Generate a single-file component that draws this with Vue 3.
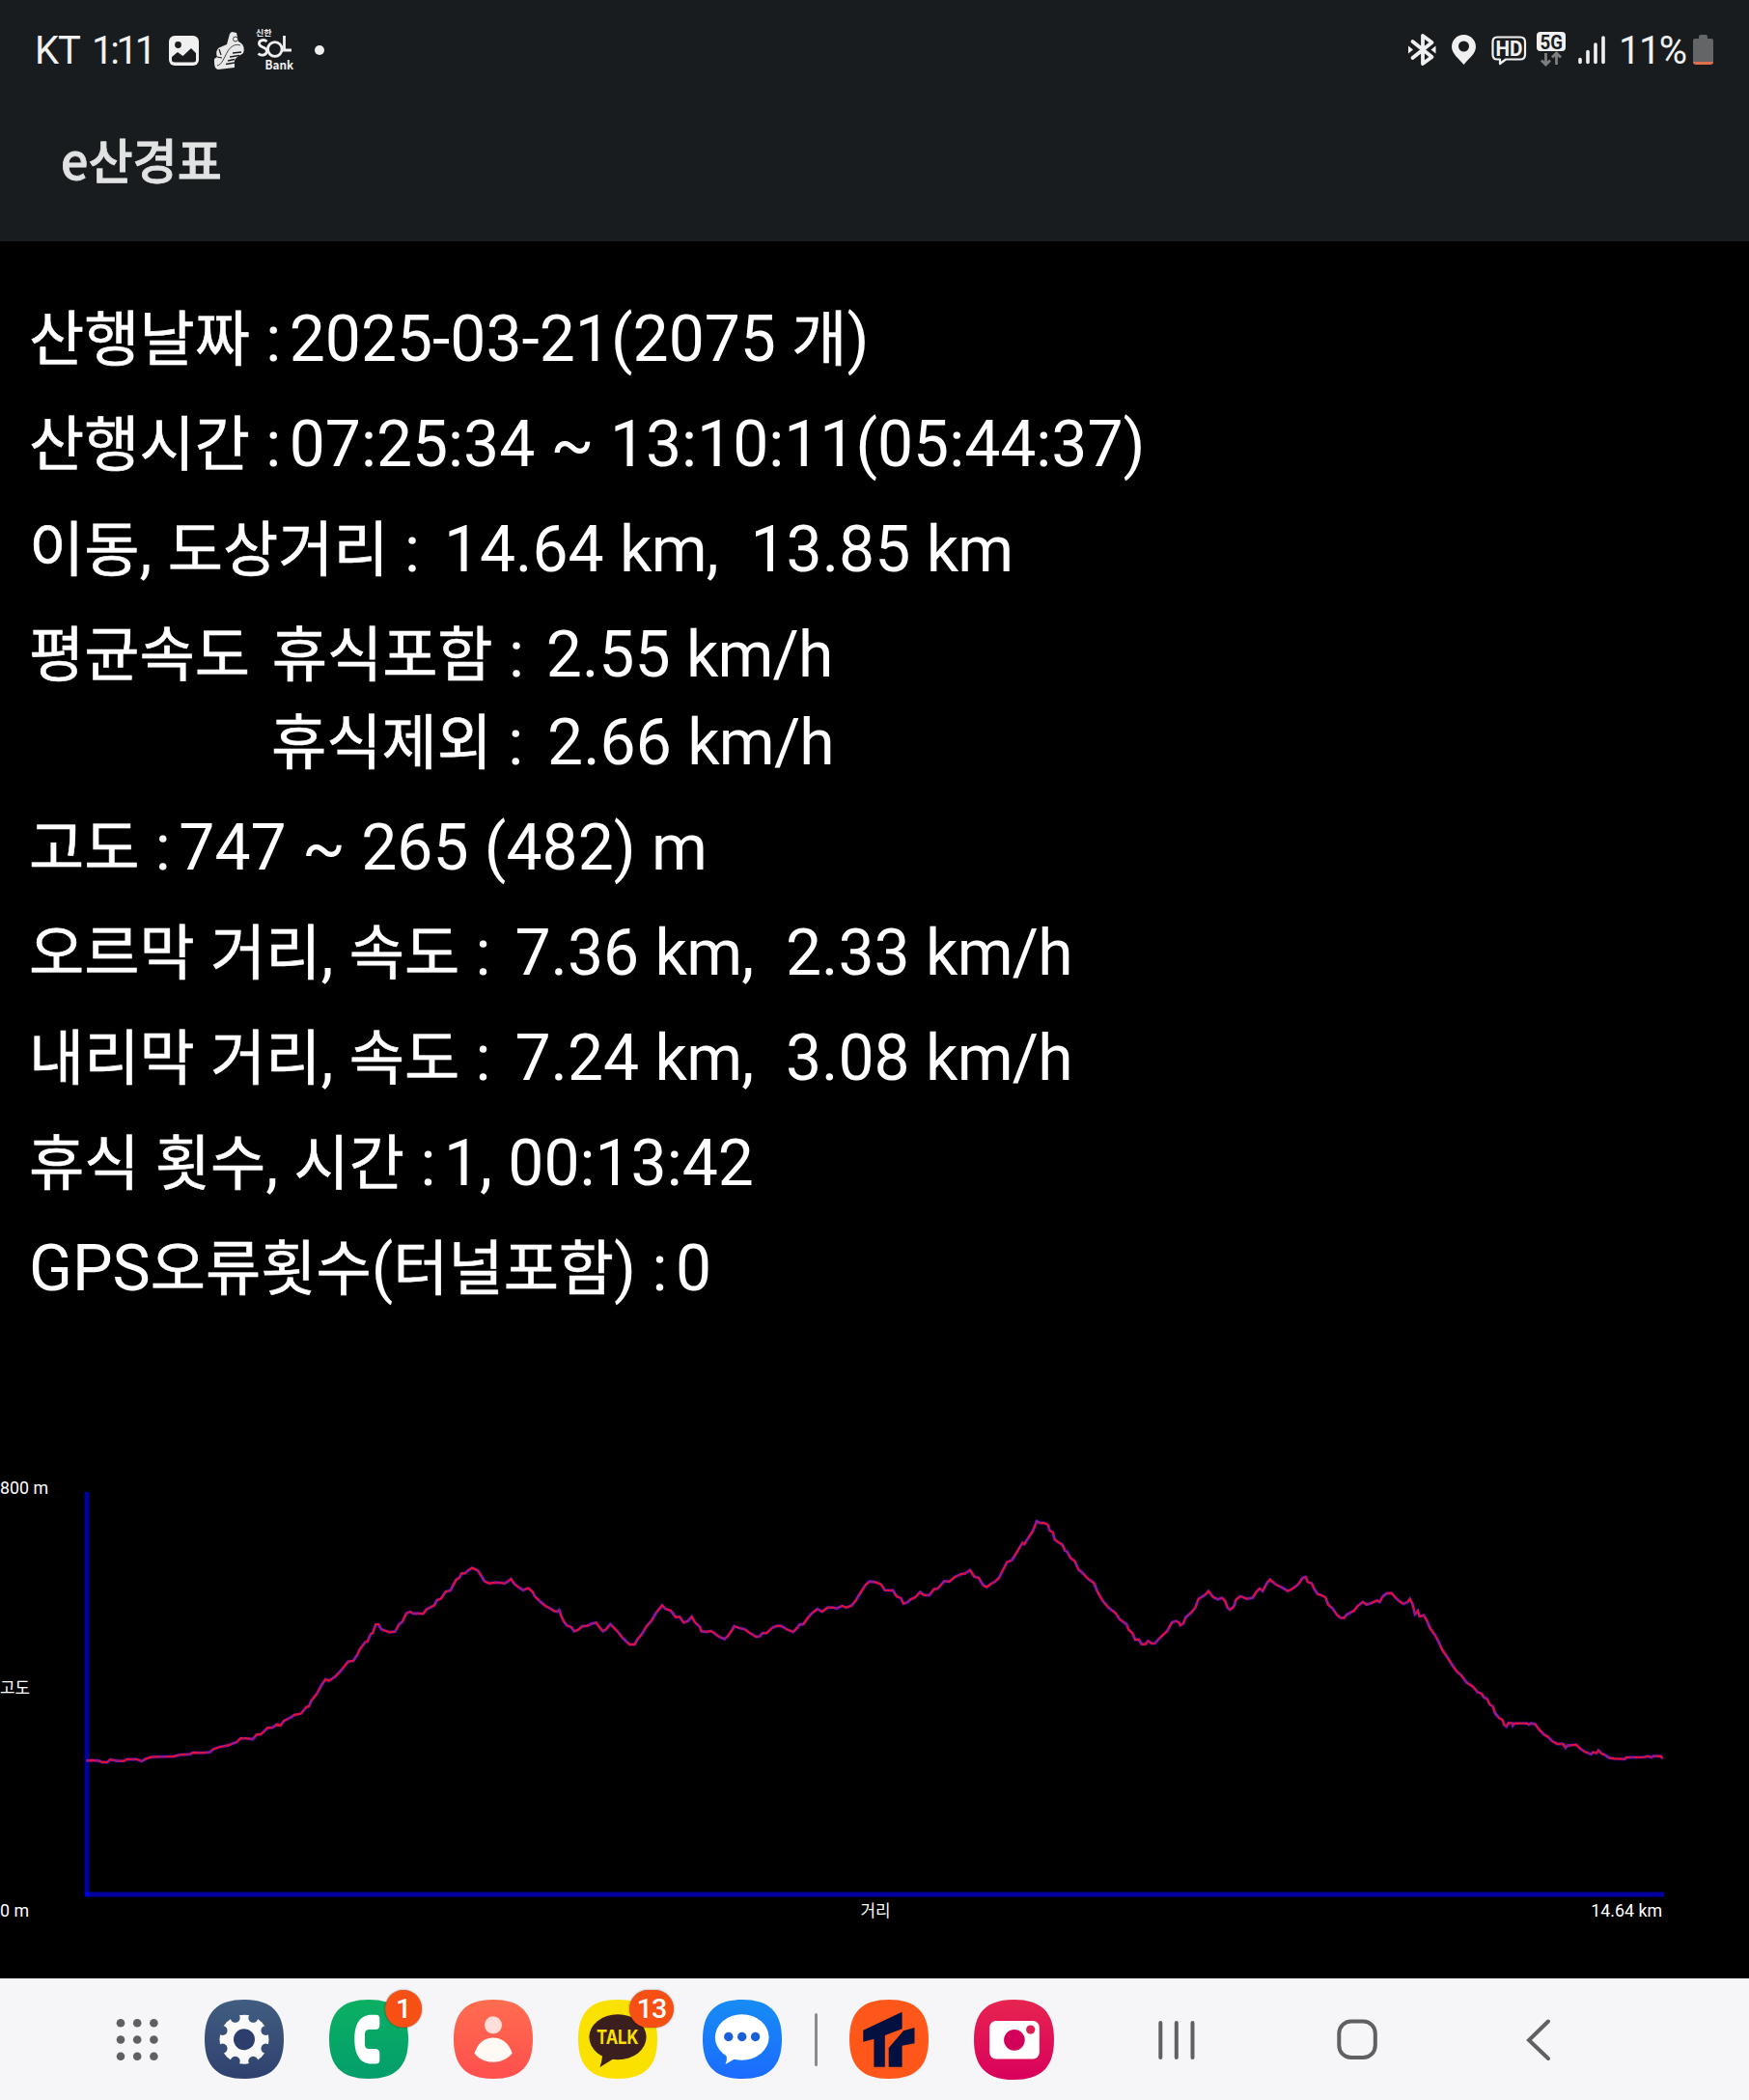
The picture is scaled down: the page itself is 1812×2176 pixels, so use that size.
<template>
  <div class="screen">
    <header class="header">
      <div class="status-bar">
        <span class="carrier">KT</span>
        <span class="clock">1:11</span>
        <svg class="icon-image" width="31" height="44" viewBox="0 0 31 44">
          <rect x="0" y="7" width="31" height="31" rx="6" fill="#f0f0f0" />
          <circle cx="9.5" cy="16.5" r="3.4" fill="#191c1f" />
          <path d="M3 29 L9 24 L14.500 28 L23 20 L28 25 V32 Q28 34.500 25.500 34.500 H6 Q3 34.500 3 32 Z" fill="#191c1f" />
        </svg>
        <svg class="icon-shoe" width="31" height="44" viewBox="0 0 31 44">
          <path d="M16 5 L18 3 L23 4 L25 13 C30 15 32 20 30 25 C28 27 22 29 21 33 L21 40 L4 42 C0 41 0 37 0 31 L3 29 C1 24 3 20 6 19 L13 16 Z" fill="#e8e8e8" />
          <path d="M3 38 C8 37 10 30 14 23 C17 18 22 15 27 17" fill="none" stroke="#191c1f" stroke-width=".8" />
          <path d="M19 25 L28 24 M16 29 L26 27.500 M14 33 L21 31.500 M12 36.500 L21 35" stroke="#191c1f" stroke-width="1.400" />
          <path d="M5 21 L7 27 M3 29 L8 30" stroke="#191c1f" stroke-width="1.200" />
          <circle cx="22" cy="10.500" r="2.500" fill="none" stroke="#191c1f" stroke-width=".8" />
        </svg>
        <svg class="icon-sol" width="40" height="56" viewBox="0 -5 40 56">
          <text class="sol-top" x="0" y="7.500" textLength="16.500" lengthAdjust="spacingAndGlyphs">신한</text>
          <path d="M11.500 14 C8 11 3 13 3.500 16.500 C4 20.500 11.500 19.500 11.500 24 C11.500 28 6 29.500 2.500 26.500" />
          <circle cx="19.800" cy="22" r="7.300" />
          <path d="M29.500 8 V23 H37" />
          <text class="sol-bank" x="9.500" y="42.500" textLength="29.500" lengthAdjust="spacingAndGlyphs">Bank</text>
        </svg>
        <span class="more-dot"></span>

        <svg class="icon-bluetooth" width="29" height="44" viewBox="0 0 29 44">
          <path d="M4.500 13 L24.500 29 L15 36 V7 L24.500 14 L4.500 30" fill="none" stroke="#f0f0f0" stroke-width="3.800" stroke-linejoin="round" stroke-linecap="round" />
          <path d="M0 17.500 L5 21.500 L0 25.500 Z M28.500 17.500 L23.500 21.500 L28.500 25.500 Z" fill="#f0f0f0" />
        </svg>
        <svg class="icon-pin" width="25" height="44" viewBox="0 0 25 44">
          <path fill-rule="evenodd" d="M12.500 6 C5.500 6 0 11.500 0 18.500 C0 25.500 7.500 31 12.500 37 C17.500 31 25 25.500 25 18.500 C25 11.500 19.500 6 12.500 6 Z M12.500 12.500 A5.500 5.500 0 1 1 12.500 23.500 A5.500 5.500 0 1 1 12.500 12.500 Z" fill="#f0f0f0" />
        </svg>
        <svg class="icon-hd" width="37" height="44" viewBox="0 0 37 44">
          <path d="M6 8.500 H30 Q35 8.500 35 13.500 V26.500 Q35 31.500 30 31.500 H15 L9 36 V31.500 H6 Q1.500 31.500 1.500 26.500 V13.500 Q1.500 8.500 6 8.500 Z" fill="none" stroke="#f0f0f0" stroke-width="2.200" stroke-linejoin="round" />
          <text x="4.500" y="28" textLength="28" lengthAdjust="spacingAndGlyphs">HD</text>
        </svg>
        <svg class="icon-5g" width="30" height="44" viewBox="0 0 30 44">
          <rect x="0" y="3" width="30" height="20" rx="4" fill="#f0f0f0" />
          <text x="3.500" y="20.500" textLength="23.500" lengthAdjust="spacingAndGlyphs">5G</text>
          <path d="M9.500 25 V36.500 M5 32.500 L9.500 37 L14 32.500 M20.500 37 V25.500 M16 29.500 L20.500 25 L25 29.500" fill="none" stroke="#7d7f80" stroke-width="2.800" />
        </svg>
        <svg class="icon-signal" width="28" height="44" viewBox="0 0 28 44">
          <path d="M2 31.500 V34.500 M10 23.500 V34.500 M18 16 V34.500 M26 9 V34.500" stroke="#f0f0f0" stroke-width="3.600" stroke-linecap="round" />
        </svg>
        <span class="battery-level">11%</span>
        <svg class="icon-battery" width="21" height="44" viewBox="0 0 21 44">
          <path d="M6 8 Q6 6 8 6 H13 Q15 6 15 8 V10 H19 Q21 10 21 12 V34 H0 V12 Q0 10 2 10 H6 Z" fill="#646566" />
          <path d="M0 34 H21 Q21 37 18 37 H3 Q0 37 0 34 Z" fill="#e0704d" />
        </svg>
      </div>
      <h1 class="title">e산경표</h1>
    </header>

    <main class="content">
      <div v-for="(row, index) in rows" :key="index" class="row" :class="{ sub: row.sub }">
        <span v-for="(cell, c) in row.cells" :key="c" class="cell">
          <span v-for="(run, r) in splitRuns(cell)" :key="r" :class="run.kind">{{ run.text }}</span>
        </span>
      </div>
    </main>

    <section class="chart">
      <svg width="1812" height="550" viewBox="0 1500 1812 550">
        <g class="axes">
          <line x1="90" y1="1546" x2="90" y2="1965" />
          <line x1="88" y1="1963" x2="1724" y2="1963" />
        </g>
        <polyline class="track-shadow" :points="trackPoints" />
        <polyline class="track" :points="trackPoints" />
        <polyline class="track-gaps" :points="trackPoints" />
        <g class="labels">
          <text x="0" y="1548">800 m</text>
          <text class="ko" x="0" y="1754.500">고도</text>
          <text x="0" y="1985.500">0 m</text>
          <text class="ko" x="891.500" y="1985.500">거리</text>
          <text x="1722" y="1985.500" text-anchor="end">14.64 km</text>
        </g>
      </svg>
    </section>

    <nav class="dock">
      <svg class="apps" width="46" height="46" viewBox="0 0 46 46">
        <circle v-for="n in 9" :key="n" :cx="6 + ((n - 1) % 3) * 17.200" :cy="6.300 + Math.floor((n - 1) / 3) * 17.200" r="4.300" />
      </svg>

      <div class="app">
        <svg width="82" height="82" viewBox="0 0 82 82">
          <defs>
            <linearGradient id="g-settings" x1="0" y1="0" x2="0" y2="1">
              <stop offset="0" stop-color="#415d80" />
              <stop offset="1" stop-color="#2f416f" />
            </linearGradient>
            <mask id="gear">
              <circle cx="41" cy="41.300" r="25.500" fill="#fff" />
              <circle v-for="n in 8" :key="n" cx="41" cy="17" r="5" fill="#000" :transform="`rotate(${n * 45 - 22.5} 41 41.300)`" />
              <circle cx="41" cy="41.300" r="11" fill="#000" />
            </mask>
          </defs>
          <path :d="squircle" fill="url(#g-settings)" />
          <circle cx="41" cy="41.300" r="12" fill="#2d3e6c" />
          <rect x="10" y="10" width="62" height="62" fill="#fafafa" mask="url(#gear)" />
        </svg>
      </div>

      <div class="app">
        <svg width="82" height="82" viewBox="0 0 82 82">
          <defs>
            <linearGradient id="g-phone" x1="0" y1="0" x2="0" y2="1">
              <stop offset="0" stop-color="#0bb062" />
              <stop offset="1" stop-color="#039e6b" />
            </linearGradient>
          </defs>
          <path :d="squircle" fill="url(#g-phone)" />
          <path d="M48.500 15.700 H44 C32 15.700 26.300 25 26.300 41 S32 66.500 44 66.500 H48.500 Q52.300 66.500 52.300 62.500 V55.500 Q52.300 51 47.500 51 H41.500 Q37 51 37 46.500 V35.500 Q37 31 41.500 31 H47.500 Q52.300 31 52.300 26.500 V19.500 Q52.300 15.700 48.500 15.700 Z" fill="#fff" />
        </svg>
        <span class="badge">1</span>
      </div>

      <div class="app">
        <svg width="82" height="82" viewBox="0 0 82 82">
          <defs>
            <linearGradient id="g-contacts" x1="0" y1="0" x2="0" y2="1">
              <stop offset="0" stop-color="#ff6d4f" />
              <stop offset="1" stop-color="#ff4f4e" />
            </linearGradient>
          </defs>
          <path :d="squircle" fill="url(#g-contacts)" />
          <circle cx="41" cy="26.300" r="9" fill="#ffded9" />
          <path d="M21.500 55.500 C25 45 32 39.500 41 39.500 S57 45 60.700 55.500 C57 60.500 50 64.700 41 64.700 S25 60.500 21.500 55.500 Z" fill="#fffaf3" />
        </svg>
      </div>

      <div class="app">
        <svg width="82" height="82" viewBox="0 0 82 82">
          <path :d="squircle" fill="#fae100" />
          <ellipse cx="41" cy="38.800" rx="29.600" ry="23.500" fill="#3b1e1e" />
          <path d="M25.300 57 Q24.500 65 22.500 70 L37 61 Z" fill="#3b1e1e" />
          <text class="talk" x="19" y="46" textLength="43.500" lengthAdjust="spacingAndGlyphs">TALK</text>
        </svg>
        <span class="badge wide">13</span>
      </div>

      <div class="app">
        <svg width="82" height="82" viewBox="0 0 82 82">
          <defs>
            <linearGradient id="g-messages" x1="0" y1="0" x2="0" y2="1">
              <stop offset="0" stop-color="#178cf4" />
              <stop offset="1" stop-color="#1b6bff" />
            </linearGradient>
          </defs>
          <path :d="squircle" fill="url(#g-messages)" />
          <ellipse cx="40.700" cy="39" rx="27.900" ry="23.700" fill="#fff" />
          <path d="M24 56 Q26 62 23.500 67 L33 61.500 Z" fill="#fff" />
          <circle cx="26.800" cy="38.500" r="4.700" fill="#1b5fd6" />
          <circle cx="40.700" cy="38.500" r="4.700" fill="#1b5fd6" />
          <circle cx="54.600" cy="38.500" r="4.700" fill="#1b5fd6" />
        </svg>
      </div>

      <span class="divider"></span>

      <div class="app recent">
        <svg width="82" height="82" viewBox="0 0 82 82">
          <path :d="squircle" fill="#ff5719" />
          <path d="M14.300 31.700 L54.600 12.700 V30.300 L36.800 37 V69.700 H25.400 V40.700 L14.300 43.700 Z" fill="#04103f" />
          <path d="M56 32.300 L67.500 29 V45.300 L54.600 47.700 V69.700 H40.700 V50 Z" fill="#04103f" />
        </svg>
      </div>

      <div class="app">
        <svg width="83" height="83" viewBox="0 0 82 82">
          <defs>
            <linearGradient id="g-camera" x1="0" y1="0" x2="0" y2="1">
              <stop offset="0" stop-color="#e72450" />
              <stop offset="1" stop-color="#d9005c" />
            </linearGradient>
          </defs>
          <path :d="squircle" fill="url(#g-camera)" />
          <rect x="16" y="21.700" width="51" height="39" rx="6.500" fill="#fff" />
          <circle cx="41.400" cy="41.300" r="10.700" fill="#d20058" />
          <circle cx="58" cy="30.700" r="4.600" fill="#de1e57" />
        </svg>
      </div>

      <svg class="nav-icon recents" width="42" height="46" viewBox="0 0 42 46">
        <path d="M4.300 6 V42 M20.800 6 V42 M37.500 6 V42" />
      </svg>
      <svg class="nav-icon home" width="42" height="46" viewBox="0 0 42 46">
        <rect x="2.300" y="4.500" width="37.500" height="37.500" rx="12.500" />
      </svg>
      <svg class="nav-icon back" width="28" height="46" viewBox="0 0 28 46">
        <path d="M24 4.500 L4 24 L24 43" />
      </svg>
    </nav>
  </div>
</template>

<script setup>
import { computed } from 'vue'

const rows = [
  { cells: ['산행날짜 :', '2025-03-21(2075 개)'] },
  { cells: ['산행시간 :', '07:25:34 ~ 13:10:11(05:44:37)'] },
  { cells: ['이동, 도상거리 :', ' 14.64 km,  13.85 km'] },
  { cells: ['평균속도 ', '휴식포함 :', ' 2.55 km/h'] },
  { cells: ['휴식제외 :', ' 2.66 km/h'], sub: true },
  { cells: ['고도 :', '747 ~ 265 (482) m'] },
  { cells: ['오르막 거리, 속도 :', ' 7.36 km,  2.33 km/h'] },
  { cells: ['내리막 거리, 속도 :', ' 7.24 km,  3.08 km/h'] },
  { cells: ['휴식 횟수, 시간 :', '1, 00:13:42'] },
  { cells: ['GPS오류횟수(터널포함) :', '0'] }
]

// Hangul runs use their own font size, units are set a little tighter
const kindOf = (part) => {
  if (/[가-힣]/.test(part)) return 'hangul'
  return part.startsWith('km') ? 'unit' : 'plain'
}

const splitRuns = (text) =>
  text
    .split(/([가-힣]+|km(?:\/h)?)/)
    .filter((part) => part !== '')
    .map((part) => ({ text: part, kind: kindOf(part) }))

const squircle = 'M41 0 C69 0 82 13 82 41 S69 82 41 82 0 69 0 41 13 0 41 0 Z'

// Altitude samples, 3 units per pixel, each leg starts at its own x
const legs = [
  {
    start: 0,
    samples:
      '268,913 285,912 305,913 318,918 334,918 342,910 355,912 365,914 385,914 395,909 410,909 425,909 440,915 452,908 468,902 490,901 540,900 560,895 590,893 600,888 630,889 652,887 662,878 680,871 712,865 722,860 735,856 748,844 765,844 785,847 798,832 810,832 832,811 845,811 862,800 872,804 882,790 905,778 915,771 935,767 952,747 960,744 968,726 985,705 1000,677 1012,660 1022,665 1042,652 1058,635 1082,605 1098,603 1110,585 1118,567 1135,545 1142,543 1152,520 1158,517 1168,490 1177,490 1185,505 1197,509 1210,514 1228,512 1240,490 1250,482 1263,455 1275,450 1285,456 1300,455 1315,457 1325,443 1350,430 1358,414 1370,410 1385,388 1400,384 1418,350 1428,344'
  },
  {
    start: 1350,
    samples:
      '85,331 95,331 105,322 118,314 135,322 145,337 155,355 170,362 190,359 205,360 218,362 230,355 238,348 248,363 258,371 275,383 292,377 305,388 312,402 325,415 345,432 360,440 372,448 382,450 388,445 395,465 402,480 412,493 425,498 435,511 448,506 460,495 475,494 490,487 503,484 512,497 524,511 532,506 547,489 560,502 570,512 582,528 595,541 607,552 622,552 632,535 645,520 660,495 675,478 690,452 700,440 708,430 718,441 735,447 750,467 762,466 775,484 788,479 800,465 810,483 825,497 830,511 845,513 860,510 870,517 885,528 902,535 912,526 925,508 932,495 945,500 965,505 980,516 1000,528 1010,527 1020,517 1032,517 1050,500 1065,494 1080,495 1095,505 1115,513 1128,500 1135,490 1147,489 1160,470 1172,456 1190,442 1205,450 1222,437 1238,437 1250,440 1267,432 1280,437 1297,431 1310,415 1320,398 1340,367 1352,356 1370,358 1388,365 1400,383 1425,384'
  },
  {
    start: 2700,
    samples:
      '87,403 100,408 108,425 120,421 130,412 145,405 160,389 172,398 188,399 203,380 215,378 235,355 250,357 268,342 285,334 300,331 315,321 328,341 342,345 355,367 367,374 380,363 392,357 405,345 415,325 430,296 445,290 460,266 478,236 484,240 500,214 510,200 522,169 535,175 545,174 557,180 562,197 572,203 578,226 590,235 602,242 610,260 617,264 628,284 640,292 652,319 665,330 682,348 700,361 712,390 728,417 745,437 768,455 780,474 802,490 808,506 820,517 828,537 840,537 848,551 860,551 868,541 880,549 890,548 905,531 928,510 942,484 955,479 965,484 968,493 978,487 985,468 1000,455 1015,438 1025,410 1045,398 1056,386 1070,404 1085,412 1098,407 1108,417 1115,437 1123,444 1135,434 1142,412 1155,402 1175,410 1193,407 1205,388 1215,378 1225,386 1237,362 1247,350 1265,365 1285,375 1303,386 1318,378 1335,365'
  },
  {
    start: 4020,
    samples:
      '28,346 38,342 45,358 57,362 65,380 75,395 88,399 100,406 108,428 122,440 135,460 145,468 157,470 165,460 188,447 200,432 215,420 228,428 245,422 260,415 268,420 278,402 290,393 305,392 318,407 330,418 342,426 355,420 362,410 370,425 375,447 378,458 387,447 392,465 405,461 415,478 425,502 440,523 452,545 462,568 478,591 495,618 508,636 522,648 538,670 558,683 572,700 585,705 592,716 602,721 610,738 620,745 627,766 640,781 650,787 655,802 662,807 668,796 680,797 682,804 688,797 725,797 732,801 738,797 751,799 765,818 780,833 790,838 805,853 820,861 838,861 846,873 852,866 878,863 892,876 905,885 925,893 932,887 942,890 948,881 958,891 970,896 980,904 995,907 1030,908 1035,903 1092,902 1100,899 1112,903 1118,899 1142,899 1147,907'
  }
]

const trackPoints = computed(() =>
  legs
    .flatMap((leg) =>
      leg.samples.split(' ').map((sample) => {
        const [x, y] = sample.split(',').map(Number)
        return `${((leg.start + x) / 3).toFixed(1)},${(1520 + y / 3).toFixed(1)}`
      })
    )
    .join(' ')
)
</script>

<style>
body {
  margin: 0;
  background: #000;
}
</style>

<style scoped>
.screen {
  width: 1812px;
  height: 2176px;
  display: flex;
  flex-direction: column;
  background: #000;
  color: #fff;
  font-family: Roboto, "Noto Sans CJK KR", sans-serif;
  overflow: hidden;
}

.screen svg {
  display: block;
  flex: none;
}

.header {
  height: 250px;
  flex: none;
  background: #191c1f;
}

.status-bar {
  display: flex;
  align-items: center;
  height: 104px;
  padding: 0 37px 0 36px;
  font-size: 40px;
  color: #f0f0f0;
}

.carrier {
  width: 59px;
  letter-spacing: -1.2px;
}

.clock {
  width: 80px;
  letter-spacing: -3.3px;
}

.icon-shoe {
  margin-left: 16px;
}

.icon-sol {
  margin-left: 12px;
}

.icon-sol path,
.icon-sol circle {
  fill: none;
  stroke: #f0f0f0;
  stroke-width: 2.8;
}

.icon-sol text {
  fill: #f0f0f0;
  font-family: "Noto Sans CJK KR", sans-serif;
  font-weight: 700;
}

.sol-top {
  font-size: 8.5px;
}

.sol-bank {
  font-size: 12.5px;
}

.more-dot {
  width: 10px;
  height: 10px;
  margin-left: 21px;
  border-radius: 50%;
  background: #f0f0f0;
}

.icon-bluetooth {
  margin-left: auto;
}

.icon-pin {
  margin-left: 16px;
}

.icon-hd {
  margin-left: 16px;
}

.icon-hd text {
  fill: #f0f0f0;
  font-size: 21.5px;
  font-weight: 700;
}

.icon-5g {
  margin-left: 10px;
}

.icon-5g text {
  fill: #191c1f;
  font-size: 21px;
  font-weight: 700;
}

.icon-signal {
  margin-left: 13px;
}

.battery-level {
  width: 76px;
  margin-left: 14px;
  letter-spacing: -1.6px;
}

.icon-battery {
  margin-left: 1px;
}

.title {
  margin: 22px 0 0 63px;
  font-family: "Noto Sans CJK KR", sans-serif;
  font-size: 50.2px;
  font-weight: 500;
  line-height: 76px;
  color: #e1e3e3;
  -webkit-text-stroke: 0.8px #e1e3e3;
}

.content {
  height: 1250px;
  flex: none;
  box-sizing: border-box;
  padding: 52px 30px 0;
}

.row {
  display: flex;
  align-items: baseline;
  gap: 8.5px;
  height: 91px;
  margin-bottom: 18px;
  font-size: 66px;
  line-height: 91px;
  white-space: pre;
}

.row:has(+ .sub) {
  gap: 6.5px;
  margin-bottom: 0;
}

.row.sub {
  padding-left: 251px;
}

.cell {
  display: flex;
  align-items: baseline;
}

.hangul {
  font-family: "Noto Sans CJK KR", sans-serif;
  font-size: 62.2px;
  font-weight: 400;
  -webkit-text-stroke: 0.6px #fff;
}

.unit {
  letter-spacing: -0.8px;
}

.chart {
  height: 550px;
  flex: none;
}

.axes line {
  stroke: #0000ff;
  stroke-opacity: 0.62;
  stroke-width: 5;
}

.track-shadow {
  fill: none;
  stroke: #0000c8;
  stroke-opacity: 0.6;
  stroke-width: 3.8;
}

.track {
  fill: none;
  stroke: #e01030;
  stroke-width: 2.4;
}

/* bluish flecks along the line */
.track-gaps {
  fill: none;
  stroke: #7a1ca8;
  stroke-opacity: 0.75;
  stroke-width: 2.4;
  stroke-dasharray: 3 6 5 9 2 5 7 12;
}

.labels text {
  fill: #fff;
  font-size: 17.8px;
}

.labels .ko {
  font-family: "Noto Sans CJK KR", sans-serif;
  font-size: 16.9px;
}

.dock {
  display: flex;
  align-items: center;
  height: 126px;
  flex: none;
  padding-left: 119px;
  background: #f6f6f9;
}

.apps {
  fill: #606062;
}

.app {
  position: relative;
  margin-left: 47px;
}

.badge {
  position: absolute;
  top: -10px;
  right: -14px;
  width: 38px;
  height: 39px;
  border-radius: 20px;
  background: #f74f14;
  box-shadow: 0 0 2px rgba(0, 0, 0, 0.5);
  color: #fff;
  font-size: 28.5px;
  font-weight: 500;
  line-height: 39px;
  text-align: center;
}

.badge.wide {
  right: -17px;
  width: 46px;
  letter-spacing: -1px;
}

.talk {
  fill: #fae100;
  font-family: Inter, sans-serif;
  font-size: 19.5px;
  font-weight: 700;
}

.divider {
  width: 3px;
  height: 55px;
  margin-left: 34px;
  border-radius: 2px;
  background: #8a8a8c;
}

.app.recent {
  margin-left: 33px;
}

.nav-icon {
  fill: none;
  stroke: #606062;
  stroke-width: 4;
  stroke-linecap: round;
}

.recents {
  margin-left: 106px;
}

.home {
  margin-left: 145px;
}

.back {
  margin-left: 153px;
}
</style>
